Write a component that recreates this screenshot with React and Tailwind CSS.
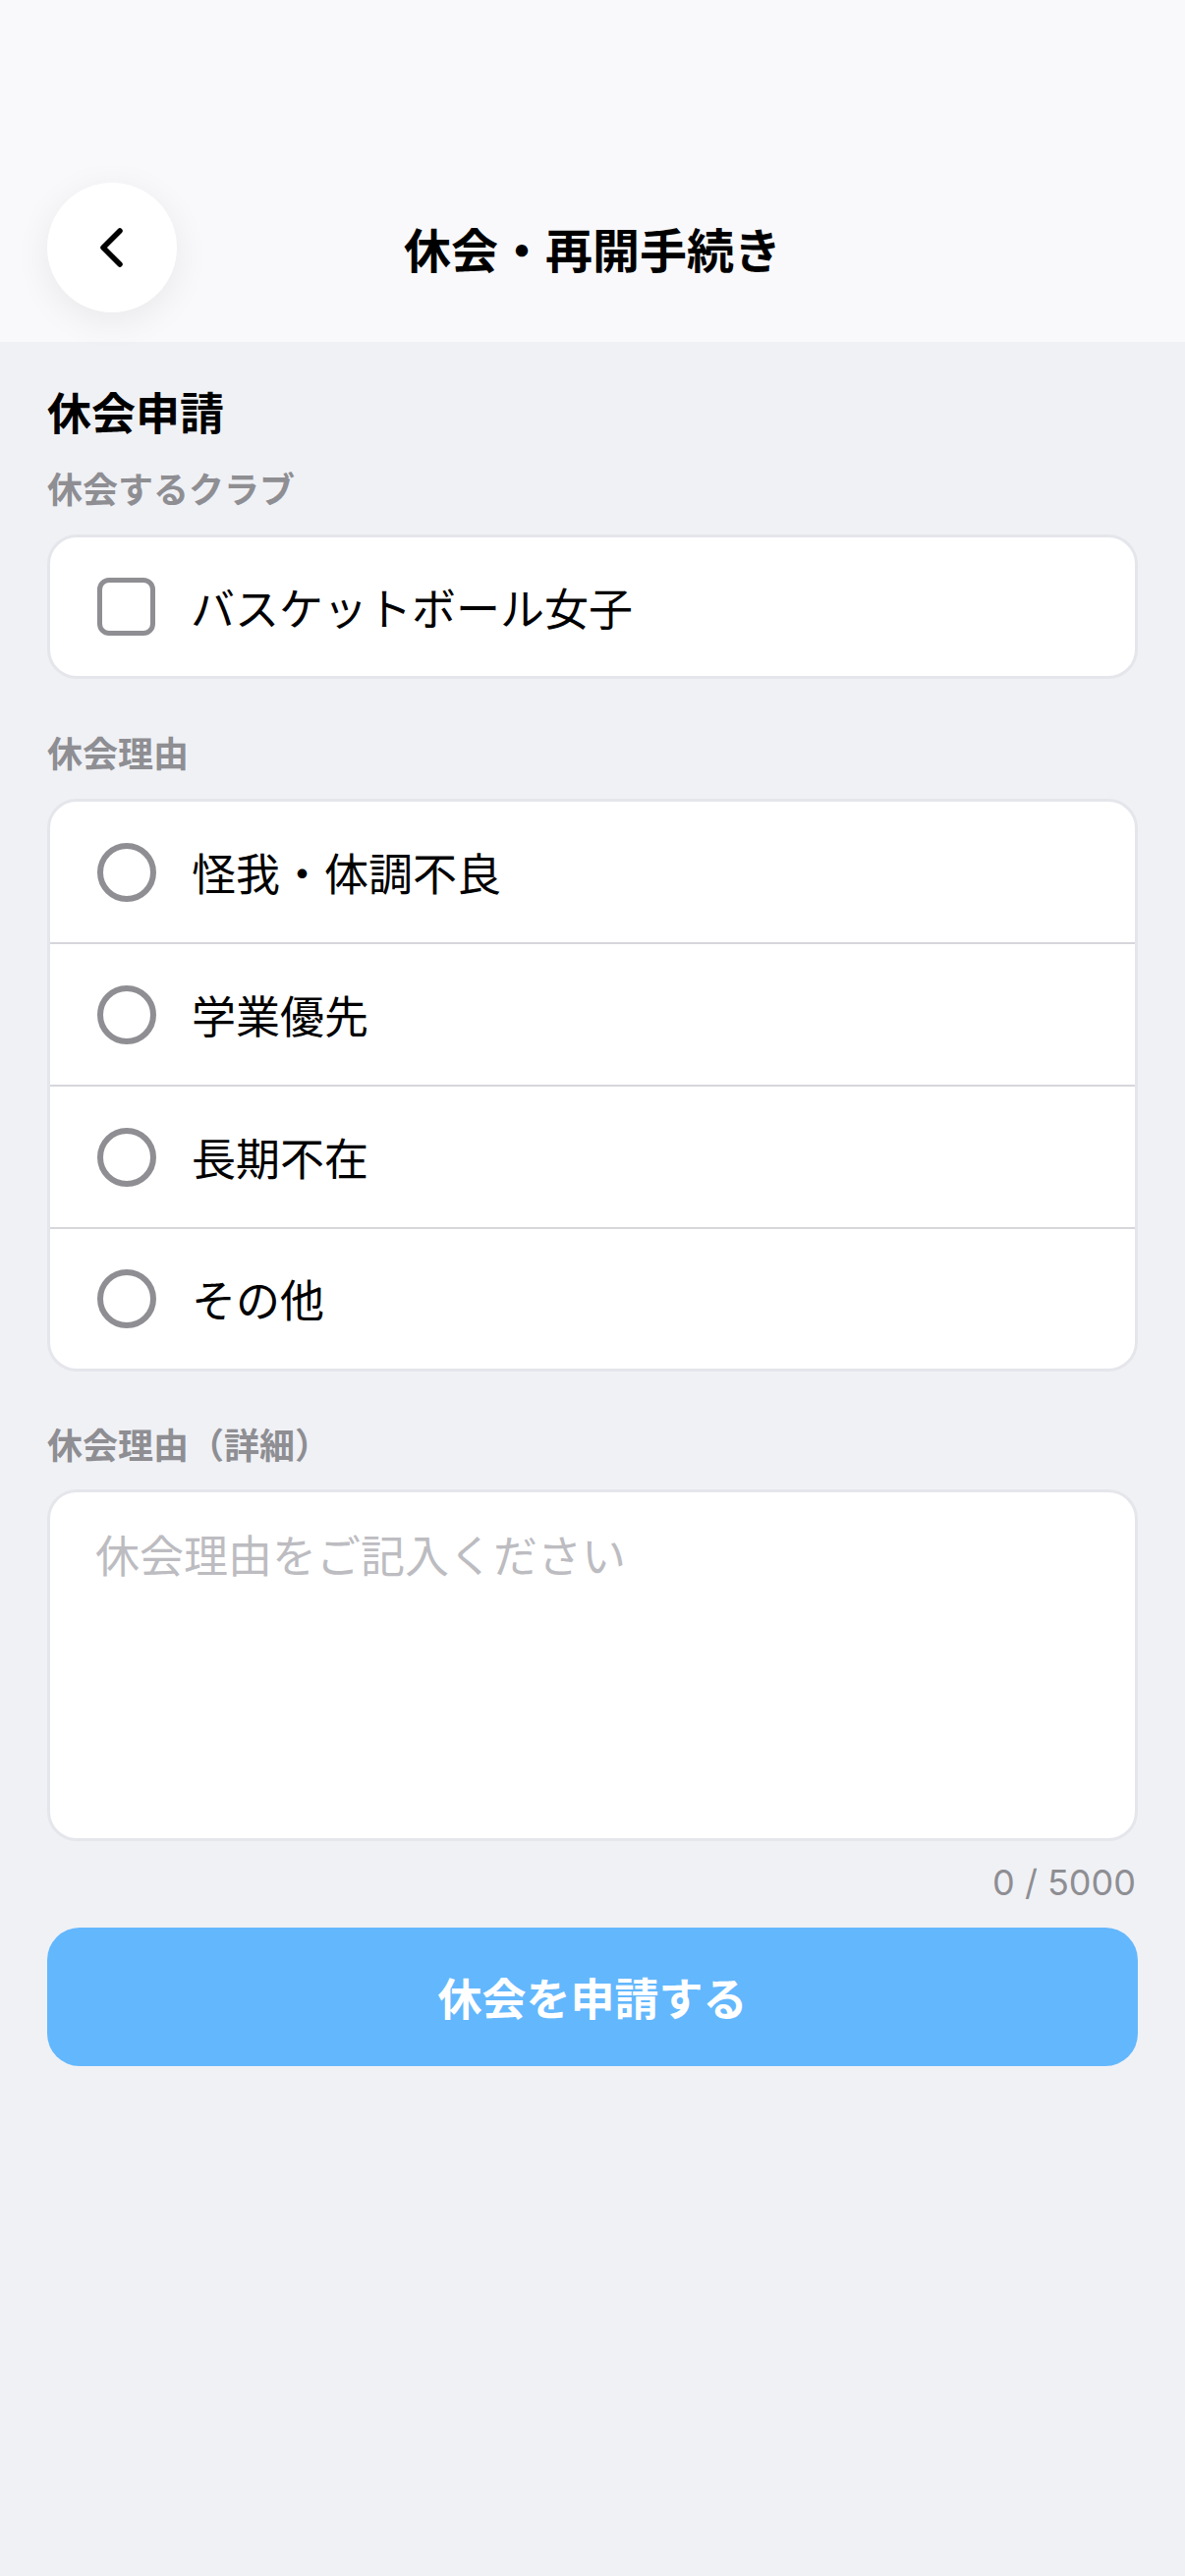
import React from "react";

const FONT = { fontFamily: '"Noto Sans CJK JP", "Noto Sans", sans-serif' };

function Radio() {
  return <div className="w-[60px] h-[60px] rounded-full border-[6px] border-[#8e8e93] shrink-0" />;
}

export default function App() {
  const reasons = ["怪我・体調不良", "学業優先", "長期不在", "その他"];
  return (
    <div className="w-full min-h-[2622px] bg-[#f0f1f5]" style={FONT}>
      {/* Header */}
      <div className="h-[348px] bg-[#f9f9fb] px-[48px] pt-[186px]">
        <div className="grid grid-cols-[132px_1fr_132px] items-center h-[132px]">
          <button className="w-[132px] h-[132px] rounded-full bg-white shadow-[0_8px_36px_rgba(0,0,0,0.07)] flex items-center justify-center">
            <svg width="28" height="44" viewBox="0 0 28 44" fill="none">
              <path d="M22 5 L5 22 L22 39" stroke="#000" strokeWidth="5.5" strokeLinecap="round" strokeLinejoin="round" />
            </svg>
          </button>
          <div className="text-center text-[48px] leading-[56px] font-bold text-black">休会・再開手続き</div>
          <div />
        </div>
      </div>

      {/* Body */}
      <div className="px-[48px]">
        <div className="mt-[44px] text-[45px] leading-[54px] font-bold text-black">休会申請</div>

        <div className="mt-[28px] text-[36px] leading-[44px] font-bold text-[#8e8e93]">休会するクラブ</div>
        <div className="mt-[26px] h-[147px] bg-white rounded-[30px] border-[3px] border-[#e5e6eb] flex items-center pl-[48px]">
          <div className="w-[59px] h-[59px] rounded-[12px] border-[5px] border-[#8e8e93] shrink-0" />
          <span className="ml-[36px] text-[45px] leading-[54px] text-black">バスケットボール女子</span>
        </div>

        <div className="mt-[52px] text-[36px] leading-[44px] font-bold text-[#8e8e93]">休会理由</div>
        <div className="mt-[26px] bg-white rounded-[30px] border-[3px] border-[#e5e6eb] overflow-hidden">
          {reasons.map((r, i) => (
            <div
              key={r}
              className={
                i === 0
                  ? "h-[143px] flex items-center pl-[48px]"
                  : i === 3
                  ? "h-[144px] flex items-center pl-[48px] border-t-2 border-[#d6d6db]"
                  : "h-[145px] flex items-center pl-[48px] border-t-2 border-[#d6d6db]"
              }
            >
              <Radio />
              <span className="ml-[36px] text-[45px] leading-[54px] text-black">{r}</span>
            </div>
          ))}
        </div>

        <div className="mt-[51px] text-[36px] leading-[44px] font-bold text-[#8e8e93]">休会理由（詳細）</div>
        <div className="mt-[25px] h-[358px] bg-white rounded-[30px] border-[3px] border-[#e5e6eb] overflow-hidden">
          <textarea
            className="w-full h-full resize-none outline-none bg-transparent px-[46px] pt-[36px] text-[45px] leading-[54px] text-black placeholder:text-[#bcbcc1]"
            style={FONT}
            placeholder="休会理由をご記入ください"
          />
        </div>

        <div
          className="mt-[20px] text-right text-[36px] leading-[44px] text-[#8e8e93] pr-[2px]"
          style={{ fontFamily: 'Inter, "Noto Sans", sans-serif' }}
        >
          0 / 5000
        </div>

        <button className="mt-[24px] w-full h-[141px] rounded-[33px] bg-[#63b7fd] flex items-center justify-center">
          <span className="text-[45px] leading-[54px] font-bold text-white">休会を申請する</span>
        </button>
      </div>
    </div>
  );
}
